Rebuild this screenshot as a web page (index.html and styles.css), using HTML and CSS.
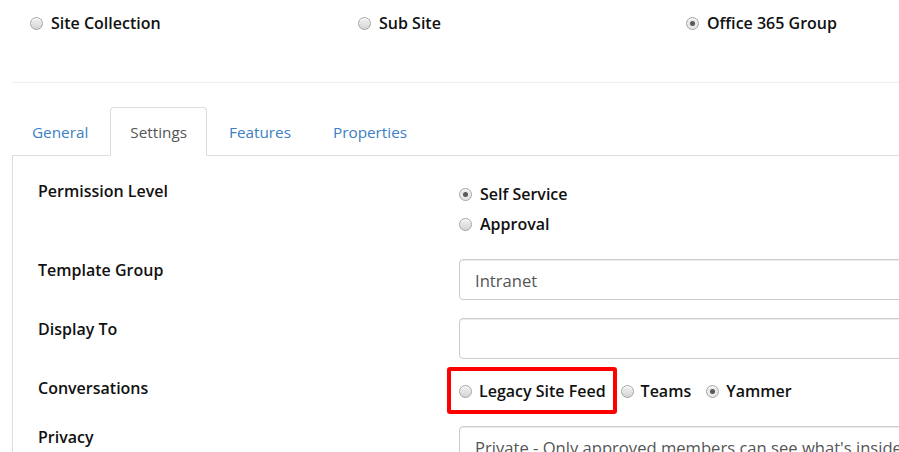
FILE: index.html
```html
<!DOCTYPE html>
<html lang="en">
<head>
<meta charset="utf-8">
<title>Site settings</title>
<link rel="stylesheet" href="styles.css">
</head>
<body>
<div class="page">
  <div class="types">
    <label class="opt"><span class="radio"></span><span class="opt-text">Site Collection</span></label>
    <label class="opt"><span class="radio"></span><span class="opt-text">Sub Site</span></label>
    <label class="opt"><span class="radio checked"></span><span class="opt-text">Office 365 Group</span></label>
  </div>
  <hr class="divider">
  <ul class="tabs">
    <li class="tab"><a>General</a></li>
    <li class="tab active"><a>Settings</a></li>
    <li class="tab"><a>Features</a></li>
    <li class="tab"><a>Properties</a></li>
  </ul>
  <div class="panel">
    <div class="row">
      <div class="label">Permission Level</div>
      <div class="control radios stacked">
        <label class="opt"><span class="radio checked"></span><span class="opt-text">Self Service</span></label>
        <label class="opt"><span class="radio"></span><span class="opt-text">Approval</span></label>
      </div>
    </div>
    <div class="row">
      <div class="label">Template Group</div>
      <div class="control"><div class="input">Intranet</div></div>
    </div>
    <div class="row">
      <div class="label">Display To</div>
      <div class="control"><div class="input"></div></div>
    </div>
    <div class="row">
      <div class="label">Conversations</div>
      <div class="control radios inline">
        <label class="opt highlighted"><span class="radio"></span><span class="opt-text">Legacy Site Feed</span><span class="mark"></span></label>
        <label class="opt"><span class="radio"></span><span class="opt-text">Teams</span></label>
        <label class="opt"><span class="radio checked"></span><span class="opt-text">Yammer</span></label>
      </div>
    </div>
    <div class="row">
      <div class="label">Privacy</div>
      <div class="control"><div class="input">Private - Only approved members can see what's inside</div></div>
    </div>
  </div>
</div>
</body>
</html>
```

FILE: styles.css
```css
html, body {
  margin: 0;
  padding: 0;
  overflow: hidden;
  background: #fff;
}
body {
  font-family: "Open Sans", "Liberation Sans", sans-serif;
  font-size: 16px;
  line-height: 22px;
  color: #111;
}
.page {
  width: 1200px;
}
.types {
  display: grid;
  grid-template-columns: 328px 328px 328px;
  padding: 12px 0 0 30px;
}
.opt {
  display: flex;
  align-items: center;
  font-weight: 600;
  white-space: nowrap;
}
.radio {
  width: 11px;
  height: 11px;
  border: 1px solid #a4a4a4;
  border-radius: 50%;
  background: linear-gradient(#f2f2f2, #d4d4d4);
  margin-right: 8px;
  position: relative;
  flex: none;
  box-shadow: inset 0 1px 0 #fff;
}
.radio.checked {
  background: #e8e8e8;
}
.radio.checked::after {
  content: "";
  position: absolute;
  left: 3px;
  top: 3px;
  width: 5px;
  height: 5px;
  border-radius: 50%;
  background: #595959;
}
.divider {
  margin: 48px 0 0 12px;
  border: 0;
  border-top: 1px solid #eee;
  height: 0;
}
.tabs {
  list-style: none;
  margin: 24px 0 0 12px;
  padding: 0;
  display: flex;
  border-bottom: 1px solid #ddd;
}
.tab {
  margin: 0 2px -1px 0;
}
.tab a {
  display: block;
  padding: 13px 19px 11px;
  font-size: 15.3px;
  line-height: 23px;
  border: 1px solid transparent;
  border-radius: 4px 4px 0 0;
  color: #3b80c3;
  font-weight: 400;
}
.tab.active a {
  color: #555;
  border-color: #ddd #ddd #fff;
  background: #fff;
}
.panel {
  margin-left: 12px;
  border-left: 1px solid #ddd;
  padding: 24px 0 0 25px;
  height: 400px;
}
.row {
  display: grid;
  grid-template-columns: 421px 1fr;
  margin-bottom: 18px;
}
.label {
  font-weight: 600;
}
.radios {
  padding: 3px 0 6px;
}
.stacked {
  display: flex;
  flex-direction: column;
  gap: 8px;
}
.stacked .opt {
  align-self: flex-start;
}
.inline {
  display: flex;
  gap: 15px;
}
.inline .radio {
  margin-right: 7px;
}
.highlighted {
  position: relative;
}
.mark {
  position: absolute;
  left: -12px;
  right: -11px;
  top: -13px;
  bottom: -12px;
  border: 4px solid #f00;
  border-radius: 3px;
}
.input {
  height: 21px;
  padding: 10px 15px 8px;
  font-size: 16.6px;
  line-height: 21px;
  border: 1px solid #ccc;
  border-radius: 4px;
  box-shadow: inset 0 1px 1px rgba(0, 0, 0, 0.08);
  color: #555;
  font-weight: 400;
  white-space: nowrap;
}
```
